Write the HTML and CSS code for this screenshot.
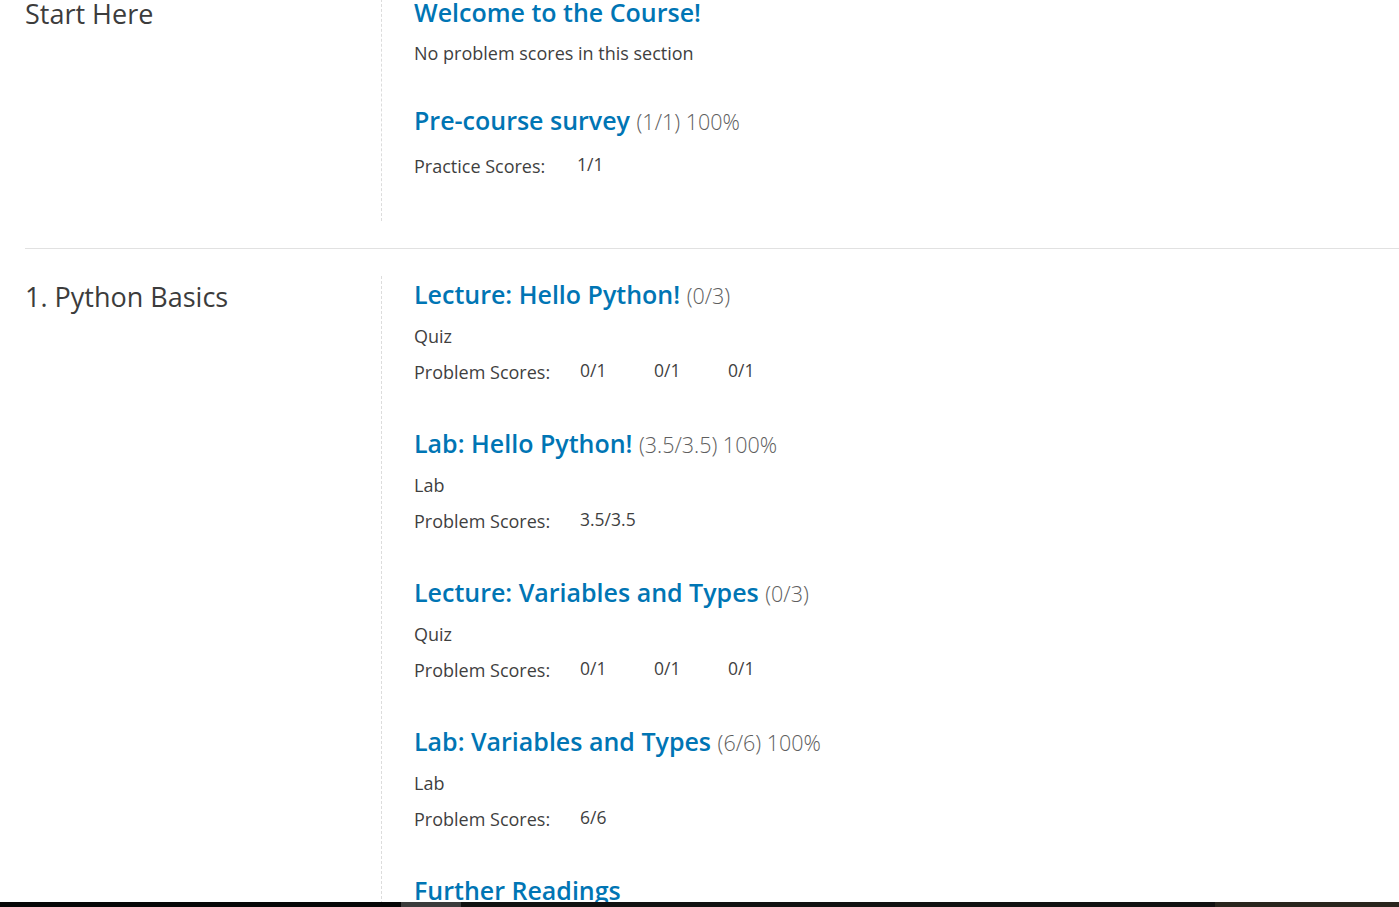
FILE: index.html
```html
<!DOCTYPE html>
<html lang="en">
<head>
<meta charset="utf-8">
<title>Progress</title>
<link rel="stylesheet" href="styles.css">
</head>
<body>
<main class="progress">
  <section class="chapter first">
    <div class="chapter-side"><h2 class="chapter-title">Start Here</h2></div>
    <div class="chapter-body">
      <div class="sub sub-welcome">
        <h3 class="sub-title"><a href="#">Welcome to the Course!</a></h3>
        <p class="sub-note">No problem scores in this section</p>
      </div>
      <div class="sub sub-survey">
        <h3 class="sub-title"><a href="#">Pre-course survey</a> <span class="sub-score">(1/1) 100%</span></h3>
        <div class="scores scores-practice"><span class="scores-label">Practice Scores:</span><span class="score">1/1</span></div>
      </div>
    </div>
  </section>
  <section class="chapter">
    <div class="chapter-side"><h2 class="chapter-title">1. Python Basics</h2></div>
    <div class="chapter-body">
      <div class="sub">
        <h3 class="sub-title"><a href="#">Lecture: Hello Python!</a> <span class="sub-score">(0/3)</span></h3>
        <p class="sub-type">Quiz</p>
        <div class="scores"><span class="scores-label">Problem Scores:</span><span class="score">0/1</span><span class="score">0/1</span><span class="score">0/1</span></div>
      </div>
      <div class="sub">
        <h3 class="sub-title"><a href="#">Lab: Hello Python!</a> <span class="sub-score">(3.5/3.5) 100%</span></h3>
        <p class="sub-type">Lab</p>
        <div class="scores"><span class="scores-label">Problem Scores:</span><span class="score">3.5/3.5</span></div>
      </div>
      <div class="sub">
        <h3 class="sub-title"><a href="#">Lecture: Variables and Types</a> <span class="sub-score">(0/3)</span></h3>
        <p class="sub-type">Quiz</p>
        <div class="scores"><span class="scores-label">Problem Scores:</span><span class="score">0/1</span><span class="score">0/1</span><span class="score">0/1</span></div>
      </div>
      <div class="sub">
        <h3 class="sub-title"><a href="#">Lab: Variables and Types</a> <span class="sub-score">(6/6) 100%</span></h3>
        <p class="sub-type">Lab</p>
        <div class="scores"><span class="scores-label">Problem Scores:</span><span class="score">6/6</span></div>
      </div>
      <div class="sub">
        <h3 class="sub-title"><a href="#">Further Readings</a></h3>
      </div>
    </div>
  </section>
</main>
<div class="taskbar"><span class="tb-a"></span><span class="tb-b"></span><span class="tb-c"></span><span class="tb-d"></span></div>
</body>
</html>
```
FILE: styles.css
```css
* { box-sizing: border-box; }
html, body { margin: 0; padding: 0; background: #fff; overflow: hidden; }
body {
  font-family: "Open Sans", "Liberation Sans", sans-serif;
  color: #3f3f3f;
  width: 1399px;
  height: 907px;
}
.progress {
  margin-top: -34px;
  padding-left: 25px;
}
.chapter {
  display: flex;
  padding: 27px 0;
  border-bottom: 1px solid #e1e1e1;
}
.chapter.first { padding: 28px 0 27px; }
.chapter-side {
  width: 357px;
  flex: none;
  border-right: 1px dashed #dcdcdc;
}
.chapter-title {
  margin: 5px 0 0;
  font-size: 27px;
  line-height: 32px;
  font-weight: 400;
  color: #3c3c3c;
}
.first .chapter-title { margin-top: 4px; }
.chapter-body {
  flex: 1;
  padding: 3px 0 0 32px;
}
.first .chapter-body { padding-bottom: 43px; }
.sub { margin-bottom: 44px; }
.sub-welcome { margin-bottom: 40px; }
.sub-survey { margin-bottom: 0; }
.sub-title {
  margin: 0;
  font-size: 25px;
  line-height: 30px;
  height: 30px;
  font-weight: 600;
  white-space: nowrap;
}
.sub-title a { color: #0075b4; text-decoration: none; }
.sub-score {
  font-weight: 300;
  font-size: 21.5px;
  color: #5e5e5e;
}
.sub-note, .sub-type {
  margin: 14px 0 0;
  font-size: 18px;
  line-height: 24px;
  height: 24px;
  font-weight: 400;
}
.sub-type { margin-top: 15px; }
.scores {
  margin-top: 12px;
  height: 24px;
  display: flex;
  align-items: baseline;
  font-size: 18px;
  line-height: 24px;
}
.scores-practice { margin-top: 19px; }
.scores-label { width: 166px; flex: none; }
.scores-practice .scores-label { width: 163px; }
.score {
  width: 74px;
  flex: none;
  font-size: 17.5px;
  color: #3f3f3f;
  position: relative;
  top: -2px;
}
.taskbar {
  position: fixed;
  left: 0;
  right: 0;
  bottom: 0;
  height: 5px;
  display: flex;
}
.tb-a { width: 401px; background: #060606; }
.tb-b { width: 60px; background: #3b3b3b; }
.tb-c { width: 754px; background: #111111; }
.tb-d { flex: 1; background: #29251d; }
```
